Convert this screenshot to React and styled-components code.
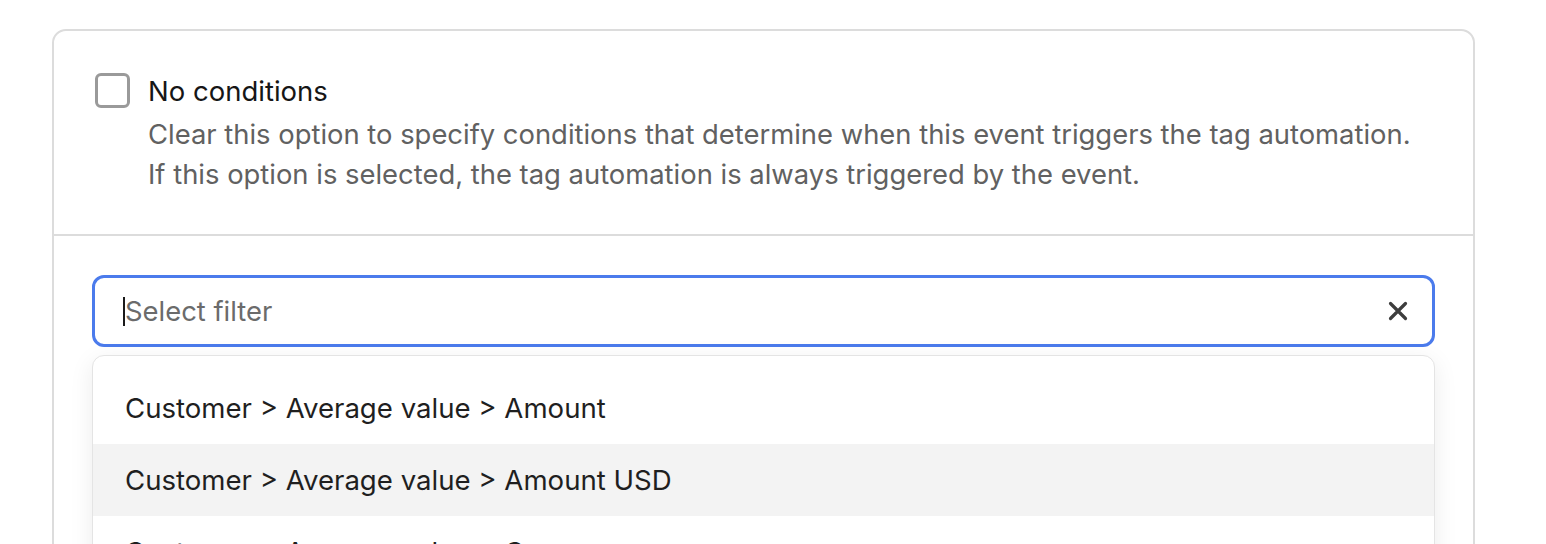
import React from 'react';
import styled, { createGlobalStyle } from 'styled-components';

const GlobalStyle = createGlobalStyle`
    html, body {
        margin: 0;
        padding: 0;
        background: #fff;
        font-family: Inter, "Liberation Sans", sans-serif;
        -webkit-font-smoothing: antialiased;
    }
`;

const filters = [
    'Customer > Average value > Amount',
    'Customer > Average value > Amount USD',
    'Customer > Average value > Currency',
    'Customer > Average value > Count',
];

const App = () => {
    return (
        <>
            <GlobalStyle />
            <Page>
                <Card>
                    <OptionSection>
                        <CheckBox type="checkbox" />
                        <OptionText>
                            <OptionTitle>No conditions</OptionTitle>
                            <OptionHelp>
                                Clear this option to specify conditions that determine when this event triggers the tag automation.
                                <br />
                                If this option is selected, the tag automation is always triggered by the event.
                            </OptionHelp>
                        </OptionText>
                    </OptionSection>

                    <FilterSection>
                        <FilterInput>
                            <Caret />
                            <Placeholder>Select filter</Placeholder>
                            <ClearButton aria-label="Clear">
                                <svg width="20" height="20" viewBox="0 0 20 20">
                                    <path d="M2.5 2.5 L17.5 17.5 M17.5 2.5 L2.5 17.5" stroke="#3d3d3d" strokeWidth="3.2" strokeLinecap="round" />
                                </svg>
                            </ClearButton>
                        </FilterInput>

                        <Dropdown>
                            {filters.map((f, i) => (
                                <DropdownItem key={i} active={i === 1}>{f}</DropdownItem>
                            ))}
                        </Dropdown>
                    </FilterSection>
                </Card>
            </Page>
        </>
    );
};

const Page = styled.div`
    padding: 29px 0 0 52px;
    height: 544px;
    box-sizing: border-box;
    overflow: hidden;
`;

const Card = styled.div`
    width: 1423px;
    box-sizing: border-box;
    border: 2px solid #dcdcdc;
    border-radius: 14px;
    background: #fff;
`;

const OptionSection = styled.div`
    display: flex;
    align-items: flex-start;
    gap: 18px;
    padding: 40px 38px 40px 41px;
    border-bottom: 2px solid #dcdcdc;
`;

const CheckBox = styled.input`
    appearance: none;
    margin: 2px 0 0 0;
    width: 35px;
    height: 35px;
    flex-shrink: 0;
    box-sizing: border-box;
    border: 3px solid #9a9a9a;
    border-radius: 6px;
    background: #fff;
`;

const OptionText = styled.div`
    display: flex;
    flex-direction: column;
`;

const OptionTitle = styled.div`
    font-size: 27.5px;
    line-height: 40px;
    color: #161616;
`;

const OptionHelp = styled.div`
    font-size: 27.4px;
    line-height: 40px;
    color: #616161;
    margin-top: 3px;
`;

const FilterSection = styled.div`
    padding: 39px 38px 0 38px;
`;

const FilterInput = styled.div`
    display: flex;
    align-items: center;
    height: 72px;
    box-sizing: border-box;
    border: 3px solid #4b7bec;
    border-radius: 12px;
    padding: 0 22px 0 28px;
`;

const Caret = styled.span`
    width: 2px;
    height: 29px;
    background: #1a1a1a;
`;

const Placeholder = styled.span`
    flex: 1;
    font-size: 27.4px;
    color: #6b6b6b;
`;

const ClearButton = styled.button`
    display: flex;
    align-items: center;
    justify-content: center;
    border: none;
    background: none;
    padding: 0;
    width: 24px;
    height: 24px;
    cursor: pointer;
`;

const Dropdown = styled.div`
    margin-top: 8px;
    border: 1px solid #e4e4e4;
    border-radius: 12px;
    padding: 16px 0;
    background: #fff;
    box-shadow: 0 6px 24px rgba(0, 0, 0, 0.08);
`;

const DropdownItem = styled.div`
    height: 72px;
    display: flex;
    align-items: center;
    padding-left: 32px;
    font-size: 27.6px;
    color: #1f1f1f;
    background: ${props => props.active ? '#f3f3f3' : 'transparent'};
`;

export default App;
